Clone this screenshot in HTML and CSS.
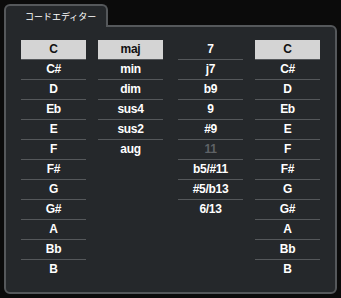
FILE: index.html
```html
<!DOCTYPE html>
<html lang="ja">
<head>
	<meta charset="UTF-8">
	<title>コードエディター</title>
	<link rel="stylesheet" href="styles.css">
</head>
<body>
	<div class="window">
		<div class="tab">コードエディター</div>
		<div class="panel">
			<ul class="col">
				<li class="active">C</li>
				<li>C#</li>
				<li>D</li>
				<li>Eb</li>
				<li>E</li>
				<li>F</li>
				<li>F#</li>
				<li>G</li>
				<li>G#</li>
				<li>A</li>
				<li>Bb</li>
				<li>B</li>
			</ul>
			<ul class="col">
				<li class="active">maj</li>
				<li>min</li>
				<li>dim</li>
				<li>sus4</li>
				<li>sus2</li>
				<li>aug</li>
			</ul>
			<ul class="col col-ext">
				<li>7</li>
				<li>j7</li>
				<li>b9</li>
				<li>9</li>
				<li>#9</li>
				<li class="off">11</li>
				<li>b5/#11</li>
				<li>#5/b13</li>
				<li>6/13</li>
			</ul>
			<ul class="col">
				<li class="active">C</li>
				<li>C#</li>
				<li>D</li>
				<li>Eb</li>
				<li>E</li>
				<li>F</li>
				<li>F#</li>
				<li>G</li>
				<li>G#</li>
				<li>A</li>
				<li>Bb</li>
				<li>B</li>
			</ul>
		</div>
	</div>
</body>
</html>
```

FILE: styles.css
```css
body{
	margin: 0;
	background: #0b0b0b;
	font-family: "Liberation Sans", Arial, sans-serif;
}
.window{
	padding: 4px 4px 0 4px;
	width: 333px;
}
.tab{
	position: relative;
	z-index: 1;
	width: 104px;
	height: 23px;
	margin-bottom: -2px;
	border: 2px solid #55585b;
	border-bottom: none;
	border-radius: 6px 6px 0 0;
	background: #25282b;
	color: #fff;
	font-family: "Noto Sans CJK JP", sans-serif;
	font-size: 9px;
	line-height: 22px;
	padding-left: 19px;
	box-sizing: border-box;
}
.panel{
	display: flex;
	align-items: flex-start;
	height: 269px;
	box-sizing: border-box;
	border: 2px solid #55585b;
	border-radius: 0 6px 6px 6px;
	background: #25282b;
	padding: 13px 0 0 15px;
}
.col{
	list-style: none;
	margin: 0 12px 0 0;
	padding: 0;
	width: 65px;
}
.col-ext{
	margin-left: 3px;
}
.col li{
	height: 19px;
	line-height: 19px;
	border-bottom: 1px solid #55585b;
	text-align: center;
	color: #fff;
	font-size: 12px;
	font-weight: bold;
	letter-spacing: -0.3px;
}
.col li:last-child{
	border-bottom: none;
}
.col li.active{
	background: #d4d4d4;
	color: #111;
}
.col li.off{
	color: #5f6266;
}
```
